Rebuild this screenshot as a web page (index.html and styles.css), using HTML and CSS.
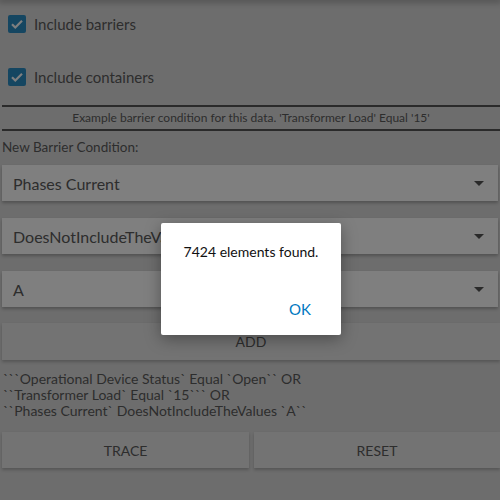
FILE: index.html
```html
<!DOCTYPE html>
<html>
<head>
<meta charset="utf-8">
<link rel="stylesheet" href="styles.css">
</head>
<body>
<div class="page">
  <div class="topbar"></div>
  <div class="checks">
    <label class="check-row">
      <span class="box"><svg viewBox="0 0 18 18" width="18" height="18"><path d="M4 9.2l3.3 3.3L14 5.8" fill="none" stroke="#fff" stroke-width="2.2"/></svg></span>
      <span class="check-label">Include barriers</span>
    </label>
    <label class="check-row">
      <span class="box"><svg viewBox="0 0 18 18" width="18" height="18"><path d="M4 9.2l3.3 3.3L14 5.8" fill="none" stroke="#fff" stroke-width="2.2"/></svg></span>
      <span class="check-label">Include containers</span>
    </label>
  </div>
  <div class="example">Example barrier condition for this data. 'Transformer Load' Equal '15'</div>
  <div class="section-label">New Barrier Condition:</div>
  <div class="select"><span>Phases Current</span><span class="arrow"></span></div>
  <div class="select"><span>DoesNotIncludeTheValues</span><span class="arrow"></span></div>
  <div class="select"><span>A</span><span class="arrow"></span></div>
  <div class="btn add">ADD</div>
  <div class="condition">```Operational Device Status` Equal `Open`` OR<br>``Transformer Load` Equal `15``` OR<br>``Phases Current` DoesNotIncludeTheValues `A``</div>
  <div class="actions">
    <div class="btn">TRACE</div>
    <div class="btn">RESET</div>
  </div>
</div>
<div class="overlay"></div>
<div class="dialog">
  <div class="dialog-msg">7424 elements found.</div>
  <div class="dialog-actions"><span class="ok">OK</span></div>
</div>
</body>
</html>
```
FILE: styles.css
```css
html, body {
  margin: 0;
  padding: 0;
  width: 500px;
  height: 500px;
  overflow: hidden;
}
body {
  background: #dadada;
  font-family: Lato, "Open Sans", sans-serif;
  color: #5a5a5a;
  position: relative;
}
.page {
  display: flex;
  flex-direction: column;
  padding-left: 2px;
}
.topbar {
  height: 0;
  margin-left: -2px;
  box-shadow: 0 0 6px 2px rgba(0,0,0,0.35);
}
.checks {
  display: flex;
  flex-direction: column;
  gap: 5px;
}
.check-row {
  height: 48px;
  display: flex;
  align-items: center;
  gap: 8px;
  padding-left: 6px;
}
.box {
  width: 18px;
  height: 18px;
  border-radius: 2px;
  background: #2b8cc2;
  display: block;
}
.box svg { display: block; }
.check-label {
  font-size: 15px;
}
.example {
  margin-top: 4px;
  border-top: 2px solid #555;
  border-bottom: 2px solid #555;
  height: 22px;
  line-height: 22px;
  text-align: center;
  font-size: 12px;
}
.section-label {
  font-size: 13.5px;
  height: 34px;
  line-height: 32px;
}
.select {
  height: 36px;
  background: #fefefe;
  margin-right: 2px;
  margin-bottom: 17px;
  display: flex;
  align-items: center;
  justify-content: space-between;
  padding: 0 14px 0 11px;
  font-size: 16px;
  box-shadow: 0 2px 3px rgba(0,0,0,0.25);
  white-space: nowrap;
  overflow: hidden;
}
.arrow {
  width: 0;
  height: 0;
  border-left: 5px solid transparent;
  border-right: 5px solid transparent;
  border-top: 5px solid #555;
}
.btn {
  height: 37px;
  background: #e6e6e6;
  display: flex;
  align-items: center;
  justify-content: center;
  font-size: 14px;
  box-shadow: 0 2px 3px rgba(0,0,0,0.22);
}
.add {
  margin-top: -1px;
}
.condition {
  font-size: 14px;
  line-height: 16px;
  padding: 11px 0 13px 1px;
  white-space: nowrap;
}
.actions {
  display: grid;
  grid-template-columns: 247px 1fr;
  gap: 5px;
}
.actions .btn {
  height: 36px;
}
.overlay {
  position: absolute;
  inset: 0;
  background: rgba(0,0,0,0.5);
}
.dialog {
  position: absolute;
  left: 161px;
  top: 223px;
  width: 180px;
  height: 112px;
  background: #fff;
  border-radius: 2px;
  box-shadow: 0 4px 16px rgba(0,0,0,0.35);
  display: flex;
  flex-direction: column;
  justify-content: space-between;
}
.dialog-msg {
  font-size: 14px;
  color: #111;
  text-align: center;
  padding-top: 20px;
}
.dialog-actions {
  display: flex;
  justify-content: flex-end;
  padding: 0 30px 17px 0;
}
.ok {
  color: #0079c1;
  font-size: 15px;
}
```
